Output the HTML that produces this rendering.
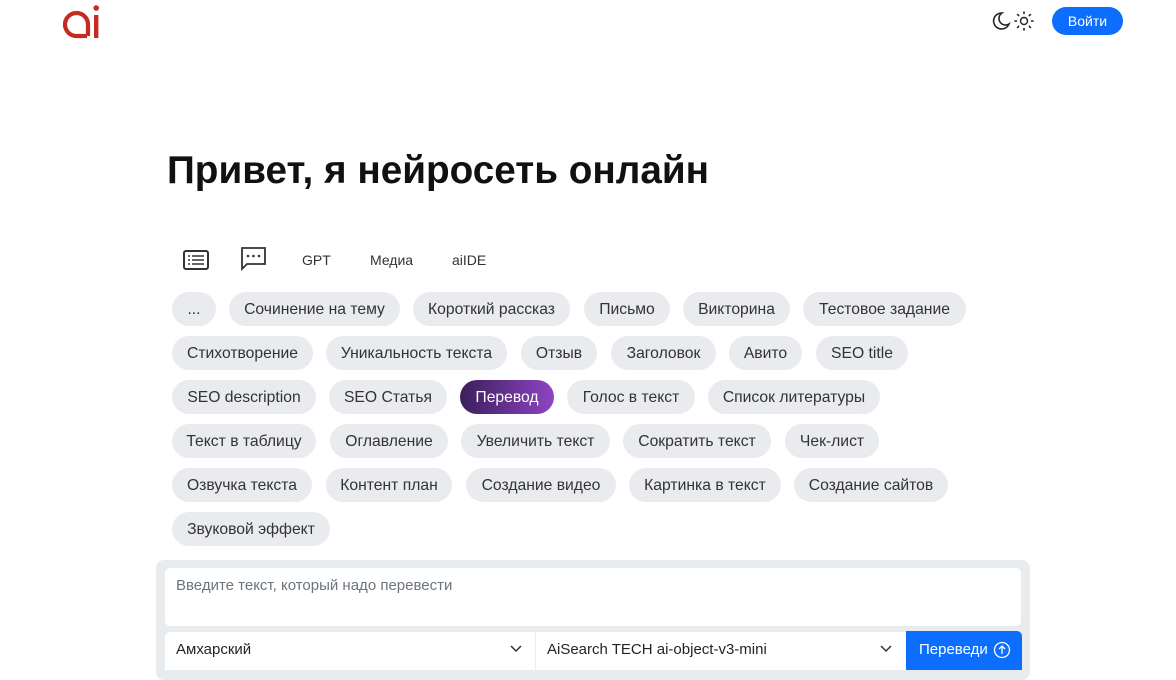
<!DOCTYPE html>
<html><head><meta charset="utf-8"><style>
body{margin:0;width:1176px;height:670px;overflow:hidden;background:#fff;font-family:"Liberation Sans",sans-serif;position:relative;color:#212529}
.a{position:absolute}
.c{position:absolute;height:34px;line-height:35px;border-radius:17px;background:#e9ebee;font-size:15.7px;text-align:center;color:#333}
</style></head><body>
<svg class="a" style="left:62px;top:2px" width="42" height="38" viewBox="0 0 42 38">
<path d="M25 34H14.5A11.5 11.5 0 1 1 26 22.5V34" fill="none" stroke="#c42b22" stroke-width="4.2"/>
<rect x="32" y="13" width="4.4" height="23" fill="#c42b22"/>
<circle cx="34.2" cy="6" r="2.8" fill="#c42b22"/>
</svg>
<svg class="a" style="left:990px;top:10px" width="46" height="22" viewBox="0 0 46 22">
<path d="M12 3a8 8 0 1 0 7 11a6.5 6.5 0 0 1-7-11z" fill="none" stroke="#222" stroke-width="1.6"/>
<circle cx="34" cy="11" r="3.5" fill="none" stroke="#222" stroke-width="1.4"/>
<g stroke="#222" stroke-width="1.6" stroke-linecap="round"><path d="M34 2v1.5M34 18.5v1.5M25 11h1.5M41.5 11h1.5M27.6 4.6l1 1M39.4 16.4l1 1M27.6 17.4l1-1M39.4 5.6l1-1"/></g></svg>
<div class="a" style="left:1052px;top:7px;width:71px;height:28px;border-radius:14px;background:#0d6efd;color:#fff;font-size:14px;line-height:28px;text-align:center">Войти</div>
<div class="a" style="left:167px;top:149px;font-size:38.7px;font-weight:bold;color:#111">Привет, я нейросеть онлайн</div>
<svg class="a" style="left:183px;top:250px" width="26" height="20" viewBox="0 0 26 20"><rect x="1" y="1" width="24" height="18" rx="2" fill="none" stroke="#333" stroke-width="2"/><g stroke="#333" stroke-width="1.6"><path d="M5 6h2M9 6h12M5 10h2M9 10h12M5 14h2M9 14h12"/></g></svg>
<svg class="a" style="left:240px;top:246px" width="27" height="26" viewBox="0 0 27 26"><path d="M2 2h23v16H7l-5 5z" fill="none" stroke="#333" stroke-width="1.8"/><circle cx="8" cy="10" r="1.3" fill="#333"/><circle cx="13.5" cy="10" r="1.3" fill="#333"/><circle cx="19" cy="10" r="1.3" fill="#333"/></svg>
<div class="a" style="left:302px;top:252px;font-size:14px;color:#333">GPT</div>
<div class="a" style="left:370px;top:252px;font-size:14px;color:#333">Медиа</div>
<div class="a" style="left:452px;top:252px;font-size:14px;color:#333">aiIDE</div>

<div class="c" style="left:172px;top:292px;width:44px">...</div>
<div class="c" style="left:229px;top:292px;width:171px">Сочинение на тему</div>
<div class="c" style="left:413px;top:292px;width:157px">Короткий рассказ</div>
<div class="c" style="left:584px;top:292px;width:86px">Письмо</div>
<div class="c" style="left:683px;top:292px;width:107px">Викторина</div>
<div class="c" style="left:803px;top:292px;width:163px">Тестовое задание</div>

<div class="c" style="left:172px;top:336px;width:141px">Стихотворение</div>
<div class="c" style="left:326px;top:336px;width:181px">Уникальность текста</div>
<div class="c" style="left:521px;top:336px;width:76px">Отзыв</div>
<div class="c" style="left:611px;top:336px;width:105px">Заголовок</div>
<div class="c" style="left:729px;top:336px;width:73px">Авито</div>
<div class="c" style="left:816px;top:336px;width:92px">SEO title</div>

<div class="c" style="left:172px;top:380px;width:144px">SEO description</div>
<div class="c" style="left:329px;top:380px;width:118px">SEO Статья</div>
<div class="c" style="left:460px;top:380px;width:94px;color:#fff;background:linear-gradient(90deg,#3b1f5a,#8e44c4)">Перевод</div>
<div class="c" style="left:567px;top:380px;width:128px">Голос в текст</div>
<div class="c" style="left:708px;top:380px;width:172px">Список литературы</div>

<div class="c" style="left:172px;top:424px;width:144px">Текст в таблицу</div>
<div class="c" style="left:330px;top:424px;width:118px">Оглавление</div>
<div class="c" style="left:461px;top:424px;width:149px">Увеличить текст</div>
<div class="c" style="left:623px;top:424px;width:148px">Сократить текст</div>
<div class="c" style="left:785px;top:424px;width:94px">Чек-лист</div>

<div class="c" style="left:172px;top:468px;width:140px">Озвучка текста</div>
<div class="c" style="left:326px;top:468px;width:126px">Контент план</div>
<div class="c" style="left:466px;top:468px;width:150px">Создание видео</div>
<div class="c" style="left:629px;top:468px;width:152px">Картинка в текст</div>
<div class="c" style="left:794px;top:468px;width:154px">Создание сайтов</div>

<div class="c" style="left:172px;top:512px;width:158px">Звуковой эффект</div>

<div class="a" style="left:156px;top:560px;width:874px;height:120px;background:#e9ecef;border-radius:8px"></div>
<div class="a" style="left:165px;top:568px;width:856px;height:58px;background:#fff;border-radius:5px"></div>
<div class="a" style="left:176px;top:577px;font-size:15px;color:#6c757d">Введите текст, который надо перевести</div>
<div class="a" style="left:165px;top:632px;width:370px;height:38px;background:#fff;border-radius:5px 0 0 0"></div>
<div class="a" style="left:536px;top:632px;width:370px;height:38px;background:#fff"></div>
<div class="a" style="left:176px;top:641px;font-size:15px">Амхарский</div>
<div class="a" style="left:547px;top:641px;font-size:15px">AiSearch TECH ai-object-v3-mini</div>
<svg class="a" style="left:510px;top:645px" width="12" height="8"><path d="M1 1l5 5 5-5" fill="none" stroke="#333" stroke-width="1.5"/></svg>
<svg class="a" style="left:880px;top:645px" width="12" height="8"><path d="M1 1l5 5 5-5" fill="none" stroke="#333" stroke-width="1.5"/></svg>
<div class="a" style="left:906px;top:631px;width:116px;height:39px;background:#0d6efd;border-radius:0 5px 0 0;color:#fff;font-size:15px;line-height:37px;padding-left:13px;box-sizing:border-box">Переведи</div>
<svg class="a" style="left:993px;top:641px" width="18" height="18" viewBox="0 0 18 18"><circle cx="9" cy="9" r="7.5" fill="none" stroke="#fff" stroke-width="1.3"/><path d="M9 13V5M6 8l3-3 3 3" fill="none" stroke="#fff" stroke-width="1.3"/></svg>
</body></html>
